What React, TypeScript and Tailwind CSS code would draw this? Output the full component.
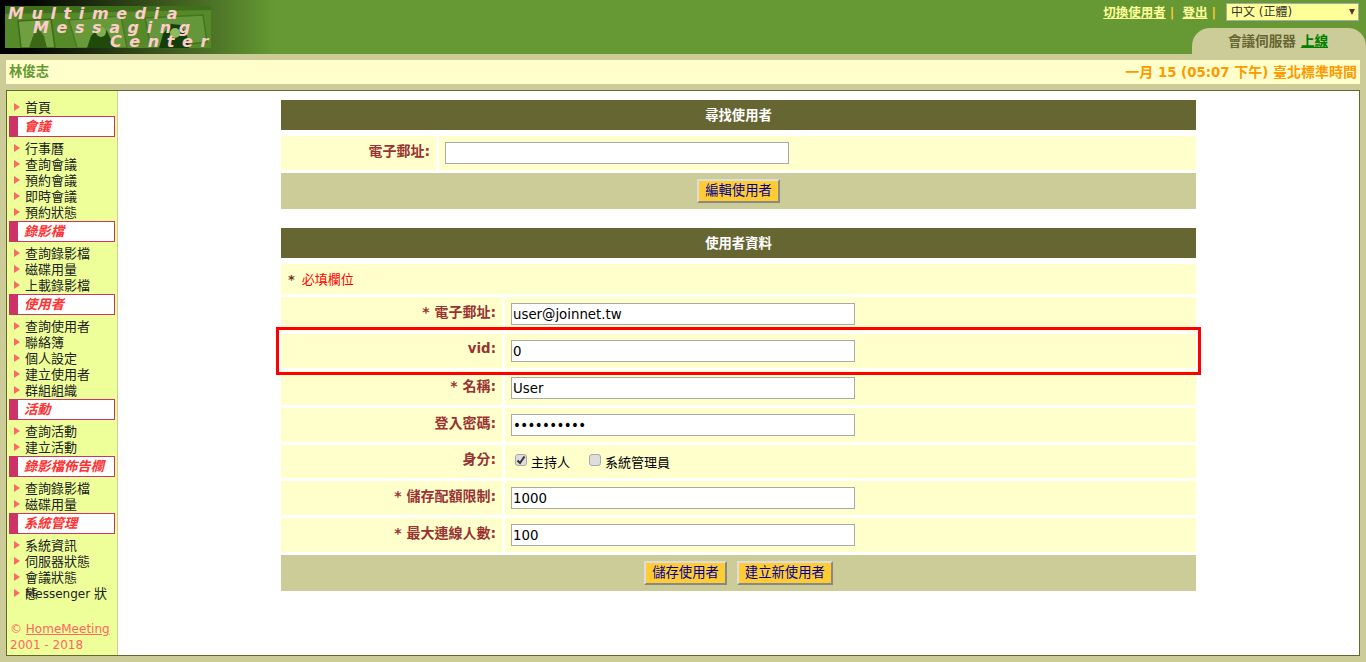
import React from "react";

const FONT = "[font-family:'DejaVu_Sans','Noto_Sans_CJK_TC',sans-serif]";

type NavGroup = { title?: string; items: string[] };
const nav: NavGroup[] = [
  { items: ["首頁"] },
  { title: "會議", items: ["行事曆", "查詢會議", "預約會議", "即時會議", "預約狀態"] },
  { title: "錄影檔", items: ["查詢錄影檔", "磁碟用量", "上載錄影檔"] },
  { title: "使用者", items: ["查詢使用者", "聯絡簿", "個人設定", "建立使用者", "群組組織"] },
  { title: "活動", items: ["查詢活動", "建立活動"] },
  { title: "錄影檔佈告欄", items: ["查詢錄影檔", "磁碟用量"] },
  { title: "系統管理", items: ["系統資訊", "伺服器狀態", "會議狀態", "Messenger"] },
];

function NavItem({ label }: { label: string }) {
  const wrapped = label === "Messenger";
  return (
    <div className="relative flex h-4 items-center whitespace-nowrap text-[13px] leading-4 text-[#222222]">
      <svg width="6" height="8" viewBox="0 0 6 8" className="ml-[7px] mr-[5px] mt-[-3px] shrink-0">
        <path d="M0 0L6 4L0 8Z" fill="#ff6666" />
      </svg>
      {wrapped ? (
        <span>
          <span className="text-[12px]">Messenger </span>狀
        </span>
      ) : (
        <span>{label}</span>
      )}
      {wrapped && <span className="absolute left-[18px] top-0">態</span>}
    </div>
  );
}

function Sidebar() {
  return (
    <aside className="flex w-[111px] shrink-0 flex-col border-r border-[#cccc99] bg-[#eeff99] pt-[9px]">
      {nav.map((g, i) => (
        <div key={i}>
          {g.title && (
            <div className="mb-1 ml-[2px] flex h-[21px] w-[106px] items-center border border-[#cc3366] border-l-[9px] bg-white pl-[6px] text-[13.33px] font-bold italic whitespace-nowrap text-[#ff3333]">
              {g.title}
            </div>
          )}
          {g.items.map((t, j) => (
            <NavItem key={j} label={t} />
          ))}
        </div>
      ))}
      <div className="mt-[19px] whitespace-nowrap pl-[3px] text-[12px] leading-4 text-[#ff6666]">
        <div>
          © <span className="underline">HomeMeeting</span>
        </div>
        <div>2001 - 2018</div>
      </div>
    </aside>
  );
}

function Row({ label, children, h = "h-[34px]" }: { label: React.ReactNode; children: React.ReactNode; h?: string }) {
  return (
    <div className={`mb-[3px] flex ${h}`}>
      <div className="mr-[3px] flex w-[221px] shrink-0 items-center justify-end bg-[#ffffcc] pr-[6px] pb-[4px] text-[14px] font-bold text-[#993333]">
        {label}
      </div>
      <div className="flex flex-1 items-center bg-[#ffffcc] pl-[6px]">{children}</div>
    </div>
  );
}

function Field({ value }: { value: string }) {
  return (
    <input
      readOnly
      type="text"
      value={value}
      className="h-[22px] w-[344px] border border-[#a9a9a9] bg-white px-[1px] pt-[1px] text-[13.33px] text-black outline-none"
    />
  );
}

function Btn({ children }: { children: React.ReactNode }) {
  return (
    <button className="flex h-6 items-center border-2 border-t-[#dddddd] border-l-[#dddddd] border-r-[#888888] border-b-[#888888] bg-[#ffcc33] px-[6px] text-[13.33px] text-[#000099]">
      {children}
    </button>
  );
}

function Head({ children }: { children: React.ReactNode }) {
  return (
    <div className="mb-[6px] flex h-[30px] items-center justify-center bg-[#666633] pt-[1px] text-[13.33px] font-bold text-white">
      {children}
    </div>
  );
}

function Check({ checked }: { checked?: boolean }) {
  return (
    <span className="mb-[3px] flex h-3 w-3 items-center justify-center rounded-[3px] border border-[#aaaaaa] bg-[#dddddd]">
      {checked && (
        <svg width="10" height="10" viewBox="0 0 10 10">
          <path d="M1.5 5.5L4 8L8.5 1.5" fill="none" stroke="#333333" strokeWidth="2" />
        </svg>
      )}
    </span>
  );
}

function Logo() {
  return (
    <div className="relative mt-[6px] ml-[5px] h-[42px] w-[206px] bg-[#5b8f2b] pt-[1px] font-['DejaVu_Sans',sans-serif] text-[16px] font-bold italic leading-[14px] tracking-[7.6px] text-[#ffcccc]">
      <svg className="absolute inset-0" width="206" height="42" viewBox="0 0 206 42">
        <rect width="206" height="42" fill="#568a28" />
        <path d="M0 0H206V4L0 8Z" fill="#3f6f1a" />
        <path d="M13 15L46 13L50 42H16Z" fill="#6f9f40" stroke="#3d6b1a" strokeWidth="1.5" />
        <path d="M24 42L28 30L33 22L39 30L42 42Z" fill="#3a6817" />
        <path d="M64 14L116 10L122 42H72Z" fill="#689a3a" stroke="#4b7a25" strokeWidth="1.5" />
        <path d="M82 42L86 30L94 21L102 25L110 42Z" fill="#1f4a0c" />
        <circle cx="96" cy="26" r="5" fill="#7fae50" />
        <path d="M140 12L198 9L202 36L146 42Z" fill="#64963a" stroke="#44751f" strokeWidth="1.5" />
        <path d="M154 42L158 28L166 18L176 19L182 30L184 42Z" fill="#143d08" />
        <circle cx="170" cy="27" r="5" fill="#8cbc5c" />
      </svg>
      <div className="relative ml-[3px] whitespace-nowrap">Multimedia</div>
      <div className="relative ml-[28px] whitespace-nowrap">Messaging</div>
      <div className="relative ml-[105px] whitespace-nowrap">Center</div>
    </div>
  );
}

export default function App() {
  return (
    <div className={`flex h-[662px] w-[1366px] flex-col overflow-hidden bg-[#cccc99] ${FONT}`}>
      <header className="flex h-[54px] shrink-0 justify-between bg-[linear-gradient(90deg,#000000_0px,#000000_20px,#669933_275px)]">
        <Logo />
        <div className="flex flex-col items-end">
          <div className="flex h-[28px] items-start pt-[3px] pr-[7px] text-[12.5px] font-bold text-[#ffff99]">
            <span className="mt-[1px] underline">切換使用者</span>
            <span className="ml-[4px] mt-[1px] text-[#ffcc33]">|</span>
            <span className="ml-[8px] mt-[1px] underline">登出</span>
            <span className="ml-[4px] mt-[1px] text-[#ffcc33]">|</span>
            <div className="relative ml-[10px] h-[18px] w-[133px]">
              <select className="h-full w-full appearance-none border border-[#a9a9a9] bg-[#ffff99] pl-1 text-xs font-normal leading-none text-[#333333] outline-none">
                <option>中文 (正體)</option>
              </select>
              <span className="absolute right-[4px] top-[6px] h-0 w-0 border-x-[3px] border-t-[6px] border-x-transparent border-t-[#663333]" />
            </div>
          </div>
          <div className="flex h-[26px] w-[174px] items-center justify-center gap-[5px] rounded-t-[18px] bg-[#cccc99] pr-[2px] text-[13.6px] font-bold text-[#666633]">
            <span>會議伺服器</span>
            <span className="text-[#008000] underline">上線</span>
          </div>
        </div>
      </header>

      <div className="mx-[6px] mt-[6px] flex h-6 shrink-0 items-center justify-between bg-[#ffffcc] px-[3px] text-[13.33px] font-bold">
        <span className="text-[#669933]">林俊志</span>
        <span className="text-[#ff9900]">
          <span className="text-[14px]">一月</span> 15 (05:07 <span className="text-[14px]">下午</span>){" "}
          <span className="text-[14px]">臺北標準時間</span>
        </span>
      </div>

      <main className="mx-[6px] mb-[6px] mt-[6px] flex min-h-0 flex-1 border border-[#666633] bg-white">
        <Sidebar />
        <div className="relative flex-1 pl-[163px] pr-[163px] pt-[9px]">
          <section className="w-[915px]">
            <Head>尋找使用者</Head>
            <div className="mb-[3px] flex h-[34px]">
              <div className="mr-[3px] flex w-[155px] shrink-0 items-center justify-end bg-[#ffffcc] pr-[6px] pb-[3px] text-[14px] font-bold text-[#993333]">
                電子郵址:
              </div>
              <div className="flex flex-1 items-center bg-[#ffffcc] pl-[6px]">
                <Field value="" />
              </div>
            </div>
            <div className="flex h-9 items-center justify-center bg-[#cccc99]">
              <Btn>編輯使用者</Btn>
            </div>
          </section>

          <section className="mt-[19px] w-[915px]">
            <Head>使用者資料</Head>
            <div className="mb-[3px] flex h-[30px] items-center bg-[#ffffcc] pl-[7px] pt-[1px] text-[13px] text-[#ff0000]">
              <span className="font-bold text-[#663333]">*</span>
              <span className="ml-[7px]">必填欄位</span>
            </div>
            <Row label="* 電子郵址:"><Field value="user@joinnet.tw" /></Row>
            <Row label={<span className="text-[13.33px]">vid:</span>}><Field value="0" /></Row>
            <Row label="* 名稱:"><Field value="User" /></Row>
            <Row label="登入密碼:">
              <input
                readOnly
                type="password"
                value="aaaaaaaaaa"
                className="h-[22px] w-[344px] border border-[#a9a9a9] bg-white px-[1px] pt-[1px] text-[13.33px] tracking-[-0.6px] text-black outline-none"
              />
            </Row>
            <Row label="身分:" h="h-[33px]">
              <div className="flex items-center pl-[4px] text-[13px] text-black">
                <Check checked />
                <span className="ml-[4px] mt-[3px]">主持人</span>
                <span className="ml-[19px]"><Check /></span>
                <span className="ml-[4px] mt-[3px]">系統管理員</span>
              </div>
            </Row>
            <Row label="* 儲存配額限制:"><Field value="1000" /></Row>
            <Row label="* 最大連線人數:"><Field value="100" /></Row>
            <div className="flex h-9 items-center justify-center gap-[10px] bg-[#cccc99]">
              <Btn>儲存使用者</Btn>
              <Btn>建立新使用者</Btn>
            </div>
          </section>

          <div className="pointer-events-none absolute left-[158px] top-[236px] h-[48px] w-[925px] border-[3px] border-[#ff0000]" />
        </div>
      </main>
    </div>
  );
}
